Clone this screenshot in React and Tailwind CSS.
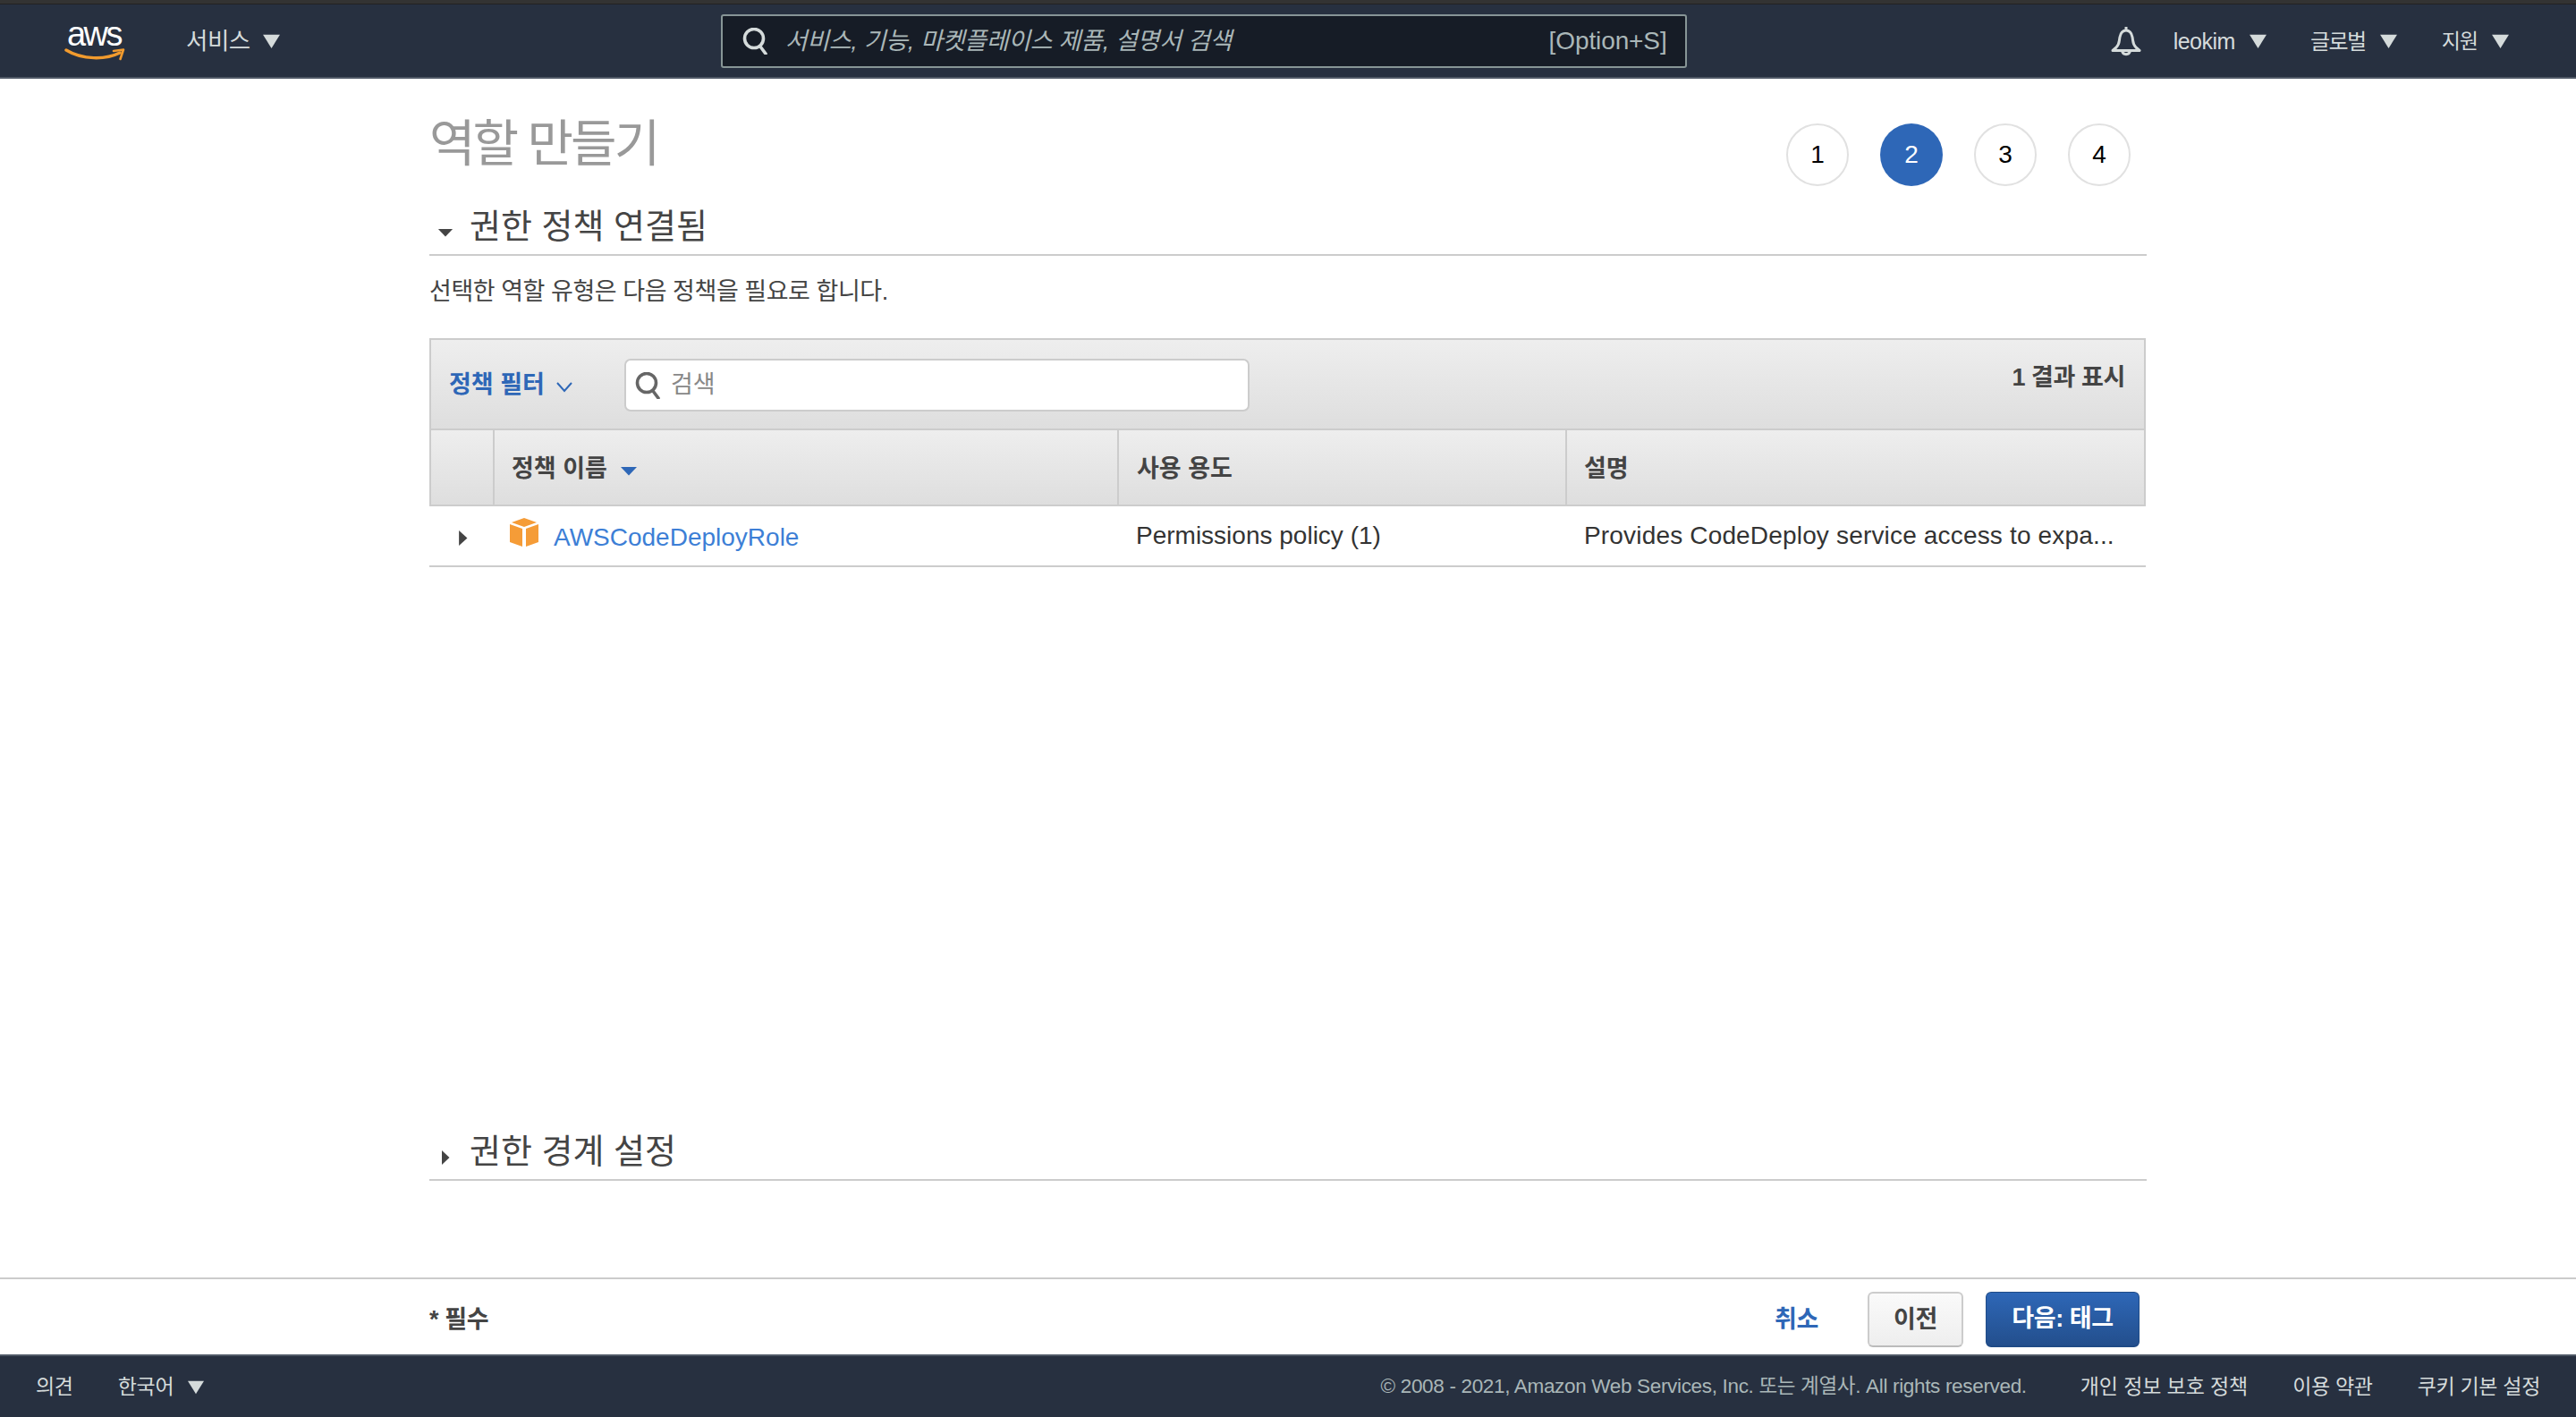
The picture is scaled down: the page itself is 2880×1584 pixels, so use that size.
const Tri = ({ className, dir = "down", color = "#d5dbdb" }) => (
  <svg className={className} viewBox="0 0 20 20" preserveAspectRatio="none">
    {dir === "down" ? <path d="M1 2 H19 L10 19 Z" fill={color} /> : <path d="M2 1 L19 10 L2 19 Z" fill={color} />}
  </svg>
);

const Search = ({ className, color, sw = 3.6 }) => (
  <svg className={className} viewBox="0 0 30 30" fill="none" stroke={color} strokeWidth={sw} strokeLinecap="round">
    <circle cx="13" cy="12" r="10.5" />
    <path d="M20 21 L26 29" />
  </svg>
);

const Bell = () => (
  <svg className="w-[34px] h-[34px] shrink-0" viewBox="0 0 34 34" fill="none" stroke="#d5dbdb" strokeWidth="3">
    <path d="M17 1 V4.5 M6 24 C10 20 9 17 10 12.5 C11 7.5 14 5 17 5 C20 5 23 7.5 24 12.5 C25 17 24 20 28 24 L32 27.5 H2 Z" strokeLinejoin="round" />
    <path d="M12.5 28 A4.6 4.6 0 0 0 21.5 28" />
  </svg>
);

const NavMenu = ({ label, className, labelClass, gap = "gap-[15px]" }) => (
  <div className={`flex items-center ${gap} ${className}`}>
    <span className={`text-[#d5dbdb] leading-none pt-[2px] ${labelClass}`}>{label}</span>
    <Tri className="w-[21px] h-[18px]" />
  </div>
);

const Step = ({ n, active }) => (
  <div
    className={`w-[70px] h-[70px] rounded-full flex items-center justify-center text-[28px] ${
      active ? "bg-[#2e67b7] text-white" : "bg-white border-2 border-[#e1e1e1] text-black"
    }`}
  >
    {n}
  </div>
);

const SectionHeading = ({ title, open, className }) => (
  <div className={`flex items-center h-[62px] border-b-2 border-[#cccccc] ${className}`}>
    <div className="w-[45px] flex justify-center pr-[9px] pt-[12px]">
      {open ? <Tri className="w-[18px] h-[10px]" color="#444444" /> : <Tri className="w-[10px] h-[18px]" dir="right" color="#444444" />}
    </div>
    <h2 className="text-[38px] text-[#444444] leading-none font-normal pb-[2px]">{title}</h2>
  </div>
);

const Th = ({ children, className }) => (
  <div className={`flex items-center pt-[4px] text-[27px] font-bold text-[#444444] ${className}`}>{children}</div>
);

export default function App() {
  return (
    <div className="h-[1584px] w-[2880px] flex flex-col bg-white overflow-hidden font-['Liberation_Sans','Noto_Sans_CJK_KR',sans-serif]">
      <div className="h-[5px] bg-[#333333] border-b border-[#222222] shrink-0" />
      <header className="h-[83px] shrink-0 bg-[#273040] border-b-2 border-[#4f5866] flex items-center pl-[72px] relative">
        <div className="w-[68px] flex flex-col items-center shrink-0">
          <span className="text-[38px] leading-[30px] text-white tracking-[-2.5px] pr-[2px]">aws</span>
          <svg className="w-[68px] h-[15px] mt-[1px]" viewBox="0 0 68 15" fill="none">
            <path d="M2 2 C20 13 46 13 62 5" stroke="#f29b2e" strokeWidth="3.4" strokeLinecap="round" />
            <path d="M55 3 L66 1.5 L62.5 12" stroke="#f29b2e" strokeWidth="2.6" strokeLinecap="round" strokeLinejoin="round" />
          </svg>
        </div>
        <NavMenu label="서비스" className="ml-[68px]" gap="gap-[13px]" labelClass="text-[26.5px] tracking-[-0.5px]" />
        <div className="ml-[492px] w-[1080px] h-[60px] bg-[#161c26] border-2 border-[#879596] rounded-[3px] flex items-center pl-[22px] pr-[20px]">
          <Search className="w-[30px] h-[30px] shrink-0" color="#d5dbdb" />
          <span className="ml-[18px] pt-[2px] text-[27px] italic text-[#aab7b8] tracking-[-0.3px]">서비스, 기능, 마켓플레이스 제품, 설명서 검색</span>
          <span className="ml-auto text-[28px] text-[#aab7b8] tracking-[-0.1px]">[Option+S]</span>
        </div>
        <div className="ml-[474px]"><Bell /></div>
        <NavMenu label="leokim" className="ml-[36px]" labelClass="text-[25px] tracking-[-0.5px]" />
        <NavMenu label="글로벌" className="ml-[48px]" labelClass="text-[24px] tracking-[-1.5px]" />
        <NavMenu label="지원" className="ml-[49px]" labelClass="text-[23px] tracking-[-1px]" />
      </header>

      <main className="flex-1 pl-[480px] w-[2400px]">
        <div className="flex justify-between">
          <h1 className="text-[56px] leading-[60px] mt-[43px] text-[#999999] font-normal tracking-[-3px]">역할 만들기</h1>
          <div className="flex gap-[35px] mt-[50px] mr-[18px]">
            <Step n="1" />
            <Step n="2" active />
            <Step n="3" />
            <Step n="4" />
          </div>
        </div>

        <SectionHeading title="권한 정책 연결됨" open className="mt-[16px]" />
        <p className="mt-[23px] text-[27px] leading-[34px] text-[#444444] tracking-[-0.45px]">선택한 역할 유형은 다음 정책을 필요로 합니다.</p>

        <div className="mt-[35px] w-[1919px]">
          <div className="h-[103px] border-2 border-[#cccccc] bg-linear-to-b from-[#eeeeee] to-[#dedede] flex pl-[20px] pr-[21px]">
            <div className="flex items-center h-[100%] pt-[2px] text-[27px] font-bold text-[#2e67b7]">
              <span>정책 필터</span>
              <svg className="w-[18px] h-[12px] ml-[13px] mt-[5px]" viewBox="0 0 18 12" fill="none" stroke="#2e67b7" strokeWidth="2"><path d="M1 1 L9 10 L17 1" /></svg>
            </div>
            <div className="ml-[58px] mt-[21px] w-[699px] h-[59px] bg-white border-2 border-[#cccccc] rounded-[7px] flex items-center pl-[10px]">
              <Search className="w-[30px] h-[30px]" color="#666666" />
              <span className="ml-[10px] text-[27px] text-[#888888]">검색</span>
            </div>
            <span className="ml-auto mt-[25px] text-[27px] font-bold leading-[34px] text-[#444444] tracking-[-0.4px]">1 결과 표시</span>
          </div>

          <div className="h-[85px] border-2 border-t-0 border-[#cccccc] bg-linear-to-b from-[#eeeeee] to-[#dedede] grid grid-cols-[69px_698px_501px_1fr]">
            <div />
            <Th className="border-l-2 border-[#cccccc] pl-[19px]">
              정책 이름
              <Tri className="w-[20px] h-[11px] ml-[14px] mt-[4px]" color="#2e67b7" />
            </Th>
            <Th className="border-l-2 border-[#cccccc] pl-[20px]">사용 용도</Th>
            <Th className="border-l-2 border-[#cccccc] pl-[19px]">설명</Th>
          </div>

          <div className="h-[68px] border-b-2 border-[#cccccc] grid grid-cols-[71px_700px_501px_1fr] text-[28px] text-[#333333]">
            <div className="flex items-center pl-[32px] pt-[4px]">
              <Tri className="w-[11px] h-[19px]" dir="right" color="#444444" />
            </div>
            <div className="flex items-center pl-[18px] pt-[3px]">
              <svg className="w-[34px] h-[34px] mt-[-12px] shrink-0" viewBox="0 0 34 34">
                <path d="M17 1 L31 6 L17 11 L3 6 Z" fill="#f59c37" />
                <path d="M1 8 L15 13 V33 L1 28 Z" fill="#f59c37" />
                <path d="M33 8 L19 13 V33 L33 28 Z" fill="#f59c37" />
              </svg>
              <span className="ml-[16px] text-[#3d7fd6]">AWSCodeDeployRole</span>
            </div>
            <div className="flex items-center pl-[19px]">Permissions policy (1)</div>
            <div className="flex items-center pl-[19px] tracking-[0.17px]">Provides CodeDeploy service access to expa...</div>
          </div>
        </div>

        <SectionHeading title="권한 경계 설정" className="mt-[624px]" />
      </main>

      <div className="h-[86px] shrink-0 border-t-2 border-[#cccccc] flex items-center pl-[480px] pr-[488px] pt-[6px]">
        <span className="text-[27px] font-bold text-[#444444] tracking-[-0.4px]">* 필수</span>
        <span className="ml-auto text-[27px] font-bold text-[#2e67b7] tracking-[-0.4px]">취소</span>
        <button className="ml-[55px] w-[107px] h-[62px] rounded-[6px] border-2 border-[#cccccc] border-b-[#bbbbbb] bg-linear-to-b from-[#fafafa] to-[#eeeeee] text-[27px] font-bold text-[#444444] tracking-[-0.4px]">이전</button>
        <button className="ml-[25px] w-[172px] h-[62px] rounded-[6px] border border-[#1f4b87] border-b-2 bg-linear-to-b from-[#2e67b7] to-[#234f8d] text-[27px] font-bold text-white tracking-[-0.4px]">다음: 태그</button>
      </div>

      <footer className="h-[70px] shrink-0 bg-[#273040] border-t-2 border-[#4f5866] flex items-center pl-[40px] pr-[40px] text-[23px] tracking-[-0.3px] text-[#d5dbdb]">
        <span>의견</span>
        <div className="ml-[50px] flex items-center gap-[15px]">
          <span>한국어</span>
          <Tri className="w-[20px] h-[17px]" />
        </div>
        <span className="ml-auto text-[22.5px] text-[#aab7b8] tracking-[-0.33px]">© 2008 - 2021, Amazon Web Services, Inc. 또는 계열사. All rights reserved.</span>
        <span className="ml-[60px] tracking-[-0.1px]">개인 정보 보호 정책</span>
        <span className="ml-[50px]">이용 약관</span>
        <span className="ml-[50px]">쿠키 기본 설정</span>
      </footer>
    </div>
  );
}
